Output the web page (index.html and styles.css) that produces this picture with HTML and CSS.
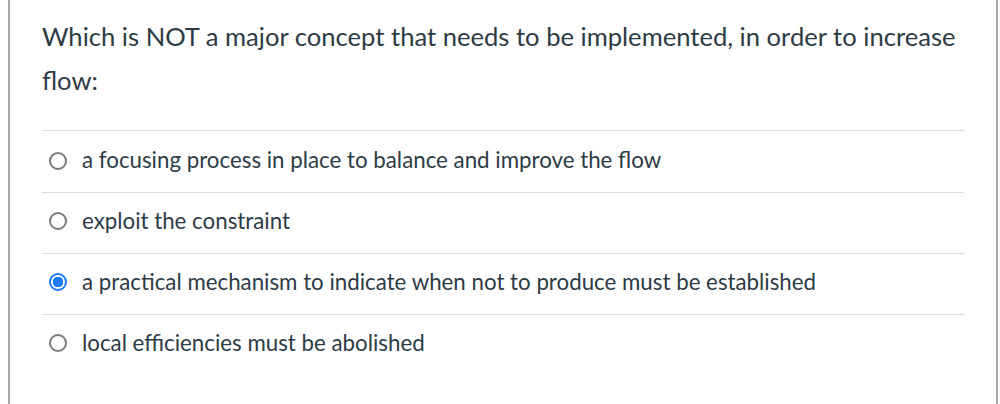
FILE: index.html
```html
<!DOCTYPE html>
<html>
<head>
<meta charset="utf-8">
<link rel="stylesheet" href="styles.css">
</head>
<body>
<div class="frame">
  <div class="question">Which is NOT a major concept that needs to be implemented, in order to increase flow:</div>
  <div class="answers">
    <label class="answer"><input type="radio" name="q"><span>a focusing process in place to balance and improve the flow</span></label>
    <label class="answer"><input type="radio" name="q"><span>exploit the constraint</span></label>
    <label class="answer"><input type="radio" name="q" checked><span>a practical mechanism to indicate when not to produce must be established</span></label>
    <label class="answer"><input type="radio" name="q"><span>local efficiencies must be abolished</span></label>
  </div>
</div>
</body>
</html>
```
FILE: styles.css
```css
html, body {
  margin: 0;
  padding: 0;
  background: #fff;
}
body {
  font-family: Lato, "Open Sans", sans-serif;
  color: #2d3b45;
}
.frame {
  margin-left: 8px;
  width: 990px;
  height: 404px;
  box-sizing: border-box;
  border-left: 2px solid #a8a8a8;
  border-right: 2px solid #a8a8a8;
  padding: 14px 30px 0 32px;
}
.question {
  font-size: 25.6px;
  line-height: 44px;
}
.answers {
  margin-top: 28px;
  margin-right: 2px;
}
.answer {
  display: flex;
  align-items: center;
  height: 61px;
  box-sizing: border-box;
  border-top: 1px solid #dcdcdc;
  padding-bottom: 6px;
  font-size: 22.3px;
}
.answer:first-child {
  height: 62px;
  padding-bottom: 4px;
}
.answer input {
  appearance: none;
  -webkit-appearance: none;
  width: 18px;
  height: 18px;
  margin: 0 0 0 7px;
  box-sizing: border-box;
  border: 2px solid #7a7a7a;
  border-radius: 50%;
  background: #fff;
  flex: none;
  position: relative;
  top: 1px;
}
.answer input:checked {
  border: 2px solid #1c7bff;
  background: radial-gradient(circle, #1c7bff 0 5px, #fff 5.5px);
}
.answer span {
  margin-left: 15px;
}
```
